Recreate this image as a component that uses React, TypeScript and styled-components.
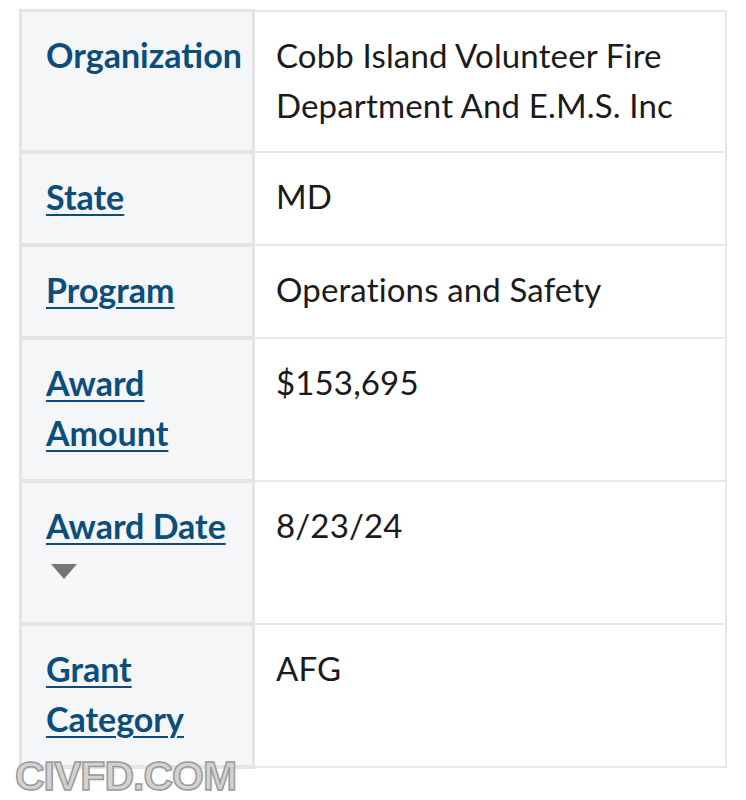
import styled, { createGlobalStyle } from 'styled-components';

const GlobalStyle = createGlobalStyle`
  body {
    margin: 0;
    background: #ffffff;
    font-family: Lato, 'Noto Sans', sans-serif;
  }
`;

type Row = {
  label: string;
  value: string[];
  link?: boolean;
  sorted?: boolean;
};

const ROWS: Row[] = [
  { label: 'Organization', value: ['Cobb Island Volunteer Fire', 'Department And E.M.S. Inc'] },
  { label: 'State', value: ['MD'], link: true },
  { label: 'Program', value: ['Operations and Safety'], link: true },
  { label: 'Award Amount', value: ['$153,695'], link: true },
  { label: 'Award Date', value: ['8/23/24'], link: true, sorted: true },
  { label: 'Grant Category', value: ['AFG'], link: true },
];

export default function App() {
  return (
    <Page>
      <GlobalStyle />
      <Table>
        <tbody>
          {ROWS.map((row) => (
            <tr key={row.label}>
              <Label>
                {row.link ? <SortLink href='#'>{row.label}</SortLink> : <Plain>{row.label}</Plain>}
                {row.sorted && (
                  <ArrowLine>
                    <SortArrow />
                  </ArrowLine>
                )}
              </Label>
              <Value>
                {row.value.map((line) => (
                  <div key={line}>{line}</div>
                ))}
              </Value>
            </tr>
          ))}
        </tbody>
      </Table>
      <Watermark>CIVFD.COM</Watermark>
    </Page>
  );
}

const Page = styled.div`
  position: relative;
  width: 746px;
  height: 800px;
  padding: 9px 19px 0 19px;
  box-sizing: border-box;
  overflow: hidden;
`;

const Table = styled.table`
  border-collapse: collapse;
  width: 708px;
  table-layout: fixed;
`;

const Label = styled.th`
  width: 233px;
  box-sizing: border-box;
  background: #f5f6f8;
  border: 3px solid #e4e4e4;
  border-bottom-width: 4px;
  padding: 18px 6px 21px 24px;
  text-align: left;
  vertical-align: top;
  font-size: 34px;
  line-height: 50px;
  font-weight: 700;
  color: #0b4d7c;
`;

const Plain = styled.span`
  color: #0b4d7c;
`;

const SortLink = styled.a`
  color: #0b4d7c;
  text-decoration: underline;
  text-decoration-thickness: 2px;
  text-underline-offset: 4px;
`;

const ArrowLine = styled.div`
  height: 50px;
  padding-top: 13px;
  box-sizing: border-box;
`;

const SortArrow = styled.div`
  width: 0;
  height: 0;
  margin-left: 5px;
  border-left: 13px solid transparent;
  border-right: 13px solid transparent;
  border-top: 15px solid #777777;
`;

const Value = styled.td`
  border: 2px solid #e8e8e8;
  padding: 18px 20px 21px 21px;
  vertical-align: top;
  font-size: 33px;
  letter-spacing: 0.15px;
  line-height: 50px;
  color: #1b1b1b;
`;

const Watermark = styled.div`
  position: absolute;
  left: 15px;
  top: 753px;
  font-family: 'Liberation Sans', Arial, sans-serif;
  font-weight: 700;
  font-size: 41px;
  letter-spacing: -1px;
  color: #d2d2d2;
  -webkit-text-stroke: 1.5px #9a9a9a;
`;
